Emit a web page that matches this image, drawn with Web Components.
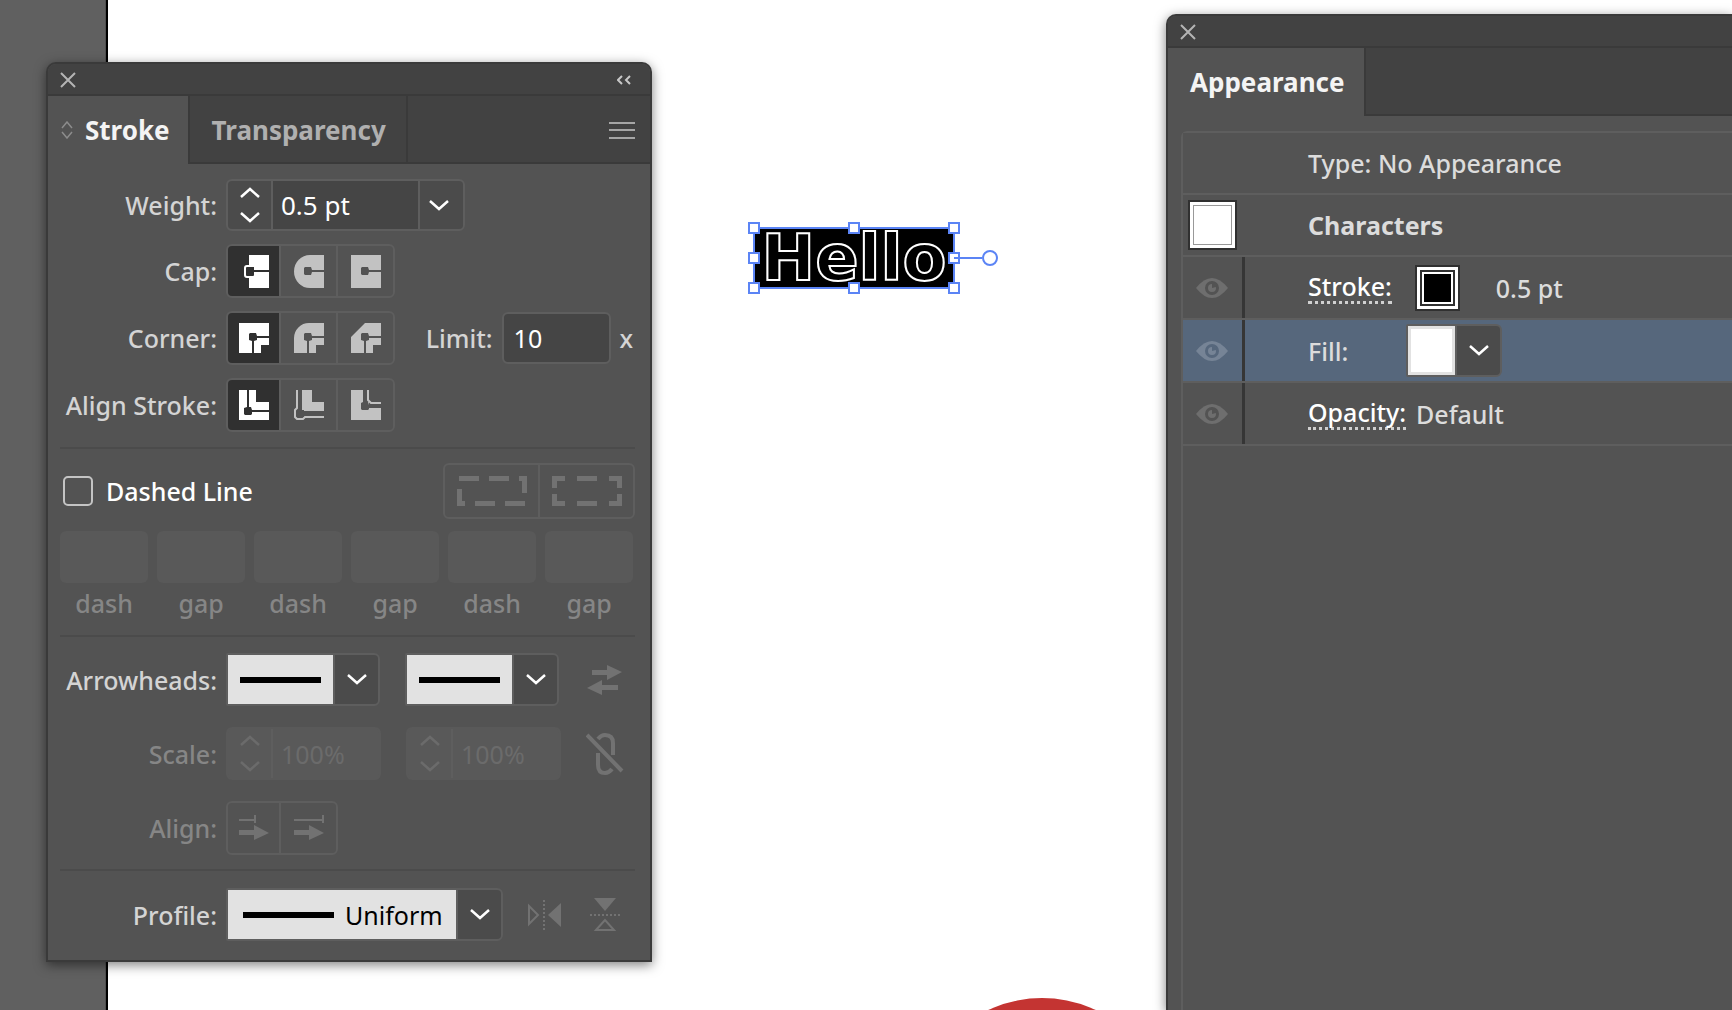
<!DOCTYPE html>
<html lang="en">
<head>
<meta charset="utf-8">
<title>Stroke and Appearance</title>
<style>
html, body {
  height: 100%;
  margin: 0;
}

body {
  overflow: hidden;
  font: 500 25px/36px "Noto Sans", "Open Sans", sans-serif;
  color: #d4d4d4;
}
</style>
</head>
<body>
<app-desktop></app-desktop>

<script>
const icons = {
  close: [16, 16, '<path d="M1 1L15 15M15 1L1 15" stroke="#b4b4b4" stroke-width="2"/>'],
  collapse: [14, 10, '<path d="M5 1L1 5L5 9M13 1L9 5L13 9" fill="none" stroke="#c8c8c8" stroke-width="2"/>'],
  menu: [26, 18, '<path d="M0 2H26M0 9H26M0 17H26" stroke="#a6a6a6" stroke-width="2"/>'],
  sort: [12, 18, '<path d="M1 7L6 1L11 7M1 11L6 17L11 11" fill="none" stroke="#8c8c8c" stroke-width="1.5"/>'],
  up: [20, 11, '<path d="M1 10L10 2L19 10" fill="none" stroke="currentColor" stroke-width="2.5"/>'],
  down: [20, 11, '<path d="M1 1L10 9L19 1" fill="none" stroke="currentColor" stroke-width="2.5"/>'],
  capButt: [30, 33, `<path d="M10 0H30V33H10Z" fill="currentColor"/>
    <rect x="6" y="11" width="10" height="11" rx="2" fill="var(--cell)" stroke="currentColor" stroke-width="2"/>
    <path d="M8 12H15V15H30V17H15V20H8Z" fill="var(--cell)"/>`],
  capRound: [30, 33, `<path d="M30 0V33H16A16 16.5 0 0 1 16 0Z" fill="currentColor"/>
    <path d="M11 12H17L18 15H30V17H18L17 20H11L10 19V13Z" fill="var(--cell)"/>`],
  capSquare: [30, 33, `<path d="M0 0H30V33H0Z" fill="currentColor"/>
    <path d="M11 12H17L18 15H30V17H18L17 20H11L10 19V13Z" fill="var(--cell)"/>`],
  cornerMiter: [30, 30, `<path d="M0 0H30V22H22V30H0Z" fill="currentColor"/>
    <path d="M11 10H17L18 13H30V15H18V17L15 18V30H13V18L10 17V11Z" fill="var(--cell)"/>`],
  cornerRound: [30, 30, `<path d="M0 30V15A15 15 0 0 1 15 0H30V22H22V30Z" fill="currentColor"/>
    <path d="M11 10H17L18 13H30V15H18V17L15 18V30H13V18L10 17V11Z" fill="var(--cell)"/>`],
  cornerBevel: [30, 30, `<path d="M0 30V14L14 0H30V22H22V30Z" fill="currentColor"/>
    <path d="M11 10H17L18 13H30V15H18V17L15 18V30H13V18L10 17V11Z" fill="var(--cell)"/>`],
  alignCenter: [30, 30, `<path d="M0 0H17V12H30V30H0Z" fill="currentColor"/>
    <path d="M8 0H10V17H12L13 20H30V22H13V24L12 25H6L5 24V18L8 17Z" fill="var(--cell)"/>`],
  alignInside: [30, 30, `<path d="M8 0H18V12H30V21H8Z" fill="currentColor"/>
    <path d="M3 0V18L1 20V27L3 29H9L11 27H30" fill="none" stroke="currentColor" stroke-width="2"/>
    <path d="M5 0H7V20H10V23H30V25H10V27H3V20H5Z" fill="var(--cell)"/>`],
  alignOutside: [30, 30, `<path d="M0 0H13V12H18V18H30V30H0Z" fill="currentColor"/>
    <path d="M17 0V10L20 13H30" fill="none" stroke="currentColor" stroke-width="2"/>
    <path d="M12 0H15V12H17L18 15H30V17H18V19L17 20H11L10 19V13L12 12Z" fill="var(--cell)"/>`],
  dashExact: [70, 30, '<path d="M2 2.5H22M32 2.5H52M62 2.5H67.500V17M2.500 13V27.500H8M18 27.500H38M48 27.500H68" fill="none" stroke="currentColor" stroke-width="5"/>'],
  dashFit: [70, 30, '<path d="M2.500 12V2.500H13M25 2.500H45M57 2.500H67.500V12M67.500 18V27.500H57M45 27.500H25M13 27.500H2.500V18" fill="none" stroke="currentColor" stroke-width="5"/>'],
  swap: [36, 30, '<path d="M5 5H20V0L35 7L20 15V10H5ZM31 20H15V15L0 23L15 30V25H31Z" fill="currentColor"/>'],
  unlink: [38, 42, '<path d="M1 2L36 38M12 6Q15 2 19 2Q27 2 27 10V22M12 20V32Q12 40 19 40Q23 40 26 36" fill="none" stroke="currentColor" stroke-width="4"/>'],
  tipBeyond: [30, 26, '<path d="M0 15H15V10L30 18L15 25V20H0Z" fill="currentColor"/><path d="M0 5H16M16 0V8" stroke="currentColor" stroke-width="2"/>'],
  tipAtEnd: [30, 26, '<path d="M0 15H15V10L30 18L15 25V20H0Z" fill="currentColor"/><path d="M0 5H29M29 0V8" stroke="currentColor" stroke-width="2"/>'],
  flipAlong: [34, 30, `<path d="M34 3V27L21 15Z" fill="currentColor"/>
    <path d="M2 6L11 15L2 24Z" fill="none" stroke="currentColor" stroke-width="2"/>
    <path d="M17 0V30" stroke="currentColor" stroke-width="2" stroke-dasharray="2 2"/>`],
  flipAcross: [30, 34, `<path d="M4 0H26L15 13Z" fill="currentColor"/>
    <path d="M6 32L15 22L24 32Z" fill="none" stroke="currentColor" stroke-width="2"/>
    <path d="M0 17H30" stroke="currentColor" stroke-width="2" stroke-dasharray="2 2"/>`],
  eye: [32, 20, `<path d="M0 10Q8 0 16 0T32 10Q24 20 16 20T0 10Z" fill="currentColor"/>
    <circle cx="16" cy="10" r="5.500" fill="currentColor" stroke="var(--cell)" stroke-width="3"/>
    <path d="M16 10V5H21L20 9Z" fill="var(--cell)"/>`],
};

class UiIcon extends HTMLElement {
  connectedCallback() {
    const [w, h, body] = icons[this.getAttribute('name')];
    this.attachShadow({ mode: 'open' }).innerHTML = `
      <style>
        :host { display: inline-flex; flex: none; }
        svg { display: block; }
      </style>
      <svg width="${w}" height="${h}" viewBox="0 0 ${w} ${h}" aria-hidden="true">${body}</svg>`;
  }
}

// Base for the elements that only need static markup and styles
class StaticElement extends HTMLElement {
  constructor() {
    super();
    this.attachShadow({ mode: 'open' }).innerHTML =
      `<style>${this.constructor.style}</style>${this.constructor.template}`;
  }
}

class FloatPanel extends StaticElement {
  static style = `
    :host {
      display: flex;
      flex-direction: column;
      box-sizing: border-box;
      border: 2px solid #3a3a3a;
      border-radius: 10px 10px 0 0;
      background: #535353;
      box-shadow: 0 3px 12px rgba(0, 0, 0, 0.5);
      overflow: hidden;
    }
    .title {
      display: flex;
      align-items: center;
      justify-content: space-between;
      height: 28px;
      padding: 2px 19px 0 12px;
      background: #424242;
      border-bottom: 2px solid #3a3a3a;
    }
    .tabs {
      display: flex;
      height: 68px;
      background: linear-gradient(#424242, #424242 66px, #3a3a3a 66px);
    }
    button {
      display: flex;
      padding: 0;
      border: 0;
      background: none;
    }
    .menu {
      margin-left: auto;
      padding: 0 15px;
      align-items: center;
    }
    :host([compact]) .extra { display: none; }
  `;
  static template = `
    <div class="title">
      <button aria-label="Close"><ui-icon name="close"></ui-icon></button>
      <button class="extra" aria-label="Collapse"><ui-icon name="collapse"></ui-icon></button>
    </div>
    <div class="tabs">
      <slot name="tab"></slot>
      <button class="menu extra" aria-label="Panel menu"><ui-icon name="menu"></ui-icon></button>
    </div>
    <slot></slot>
  `;
}

class PanelTab extends StaticElement {
  static style = `
    :host {
      display: flex;
      box-sizing: border-box;
      border-right: 2px solid #3a3a3a;
      color: #b0b0b0;
    }
    :host([selected]) {
      background: #535353;
      color: #f4f4f4;
    }
    button {
      display: flex;
      align-items: center;
      gap: 12px;
      padding: 0 20px 0 22px;
      border: 0;
      background: none;
      color: inherit;
      font: inherit;
      font-size: 26px;
      font-weight: 700;
    }
    :host([sortable]) button { padding: 0 18px 0 13px; }
    ui-icon { display: none; }
    :host([sortable]) ui-icon { display: inline-flex; }
  `;
  static template = '<button><ui-icon name="sort"></ui-icon><slot></slot></button>';
}

class ButtonStrip extends StaticElement {
  static style = `
    :host {
      --cell: #535353;
      display: inline-flex;
      gap: 2px;
      border: 2px solid #5e5e5e;
      border-radius: 6px;
      background: #5e5e5e;
      overflow: hidden;
      color: #c2c2c2;
    }
    :host([disabled]) { color: #727272; }
    ::slotted(button) {
      display: flex;
      align-items: center;
      justify-content: center;
      width: 55px;
      height: 50px;
      padding: 0;
      border: 0;
      background: var(--cell);
      color: inherit;
    }
    ::slotted(button:first-child) { width: 51px; }
    :host([wide]) ::slotted(button) {
      width: 93px;
      height: 52px;
    }
    ::slotted(button[aria-pressed="true"]) {
      --cell: #303030;
      color: #fff;
    }
  `;
  static template = '<slot></slot>';
}

class StepperField extends StaticElement {
  static style = `
    :host {
      display: inline-flex;
      gap: 2px;
      border: 2px solid #5e5e5e;
      border-radius: 6px;
      background: #5e5e5e;
      overflow: hidden;
      color: #fff;
    }
    .steps, .more {
      display: flex;
      flex-direction: column;
      align-items: center;
      justify-content: center;
      box-sizing: border-box;
      width: 43px;
      height: 48px;
      background: #4b4b4b;
    }
    .steps { justify-content: space-between; }
    .more { padding-right: 5px; }
    button {
      display: flex;
      padding: 6px 10px;
      border: 0;
      background: none;
      color: inherit;
    }
    ::slotted(input) {
      box-sizing: border-box;
      width: 145px;
      border: 0;
      border-radius: 0;
      padding: 0 8px;
      background: #454545;
      color: inherit;
      font: inherit;
      font-size: 26px;
      font-weight: 400;
    }
    :host(:not([menu])) .more { display: none; }
    :host([disabled]) {
      border-color: #595959;
      color: #6b6b6b;
    }
    :host([disabled]) .steps {
      height: 49px;
      background: #595959;
    }
    :host([disabled]) ::slotted(input) {
      width: 106px;
      background: #595959;
      font-size: 25px;
    }
  `;
  static template = `
    <div class="steps">
      <button aria-label="Increase"><ui-icon name="up"></ui-icon></button>
      <button aria-label="Decrease"><ui-icon name="down"></ui-icon></button>
    </div>
    <slot></slot>
    <div class="more"><button aria-label="Presets"><ui-icon name="down"></ui-icon></button></div>
  `;
}

// The slotted select lies over the preview and the chevron
class PreviewSelect extends StaticElement {
  static style = `
    :host {
      display: inline-grid;
      grid-template-columns: var(--preview, 105px) 43px;
      gap: 2px;
      box-sizing: border-box;
      height: 53px;
      border: 2px solid #5e5e5e;
      border-radius: 2px 6px 6px 2px;
      background: #5e5e5e;
      overflow: hidden;
      color: #fff;
    }
    .preview {
      grid-area: 1 / 1;
      display: flex;
      align-items: center;
      padding: 0 12px;
      background: #e2e2e2;
    }
    .line {
      flex: 1;
      height: 6px;
      background: #000;
    }
    :host([named]) .preview { padding: 0 122px 0 15px; }
    :host([swatch]) .preview { padding: 3px; }
    :host([swatch]) .line {
      height: 100%;
      background: #fff;
    }
    .chevron {
      grid-area: 1 / 2;
      display: flex;
      align-items: center;
      justify-content: center;
      background: #4b4b4b;
    }
    ::slotted(select) {
      grid-area: 1 / 1 / 2 / 3;
      z-index: 1;
      min-width: 0;
      appearance: none;
      border: 0;
      padding: 0 0 0 117px;
      background: none;
      color: #000;
      font: inherit;
      font-weight: 400;
    }
  `;
  static template = `
    <div class="preview"><div class="line"></div></div>
    <div class="chevron"><ui-icon name="down"></ui-icon></div>
    <slot></slot>
  `;
}

class StrokeOptions extends StaticElement {
  static style = `
    :host { display: block; }
    section {
      display: flex;
      flex-direction: column;
      gap: 13px;
      margin: 0 15px 0 12px;
      padding: 15px 0;
      border-bottom: 2px solid #4b4b4b;
    }
    .dashes {
      gap: 12px;
      padding: 14px 0;
    }
    .heads {
      gap: 21px;
      padding: 16px 0 14px;
    }
    .profile {
      padding: 17px 0 19px;
      border: 0;
    }
    .row {
      display: flex;
      align-items: center;
    }
    .name {
      width: 157px;
      margin-right: 9px;
      text-align: right;
      white-space: nowrap;
    }
    .off { color: #868686; }
    .second { margin-left: 25px; }
    .limit { margin: 0 9px 0 auto; }
    .limit-field {
      box-sizing: border-box;
      width: 109px;
      height: 52px;
      margin-right: 9px;
      padding: 0 10px;
      border: 2px solid #5e5e5e;
      border-radius: 6px;
      background: #454545;
      color: #fff;
      font: inherit;
      font-weight: 400;
    }
    .unit { margin-right: 2px; }
    .check {
      display: flex;
      align-items: center;
      gap: 13px;
      margin-right: auto;
      padding-left: 3px;
      color: #fff;
    }
    .check input {
      appearance: none;
      width: 30px;
      height: 30px;
      margin: 0;
      border: 2px solid #c4c4c4;
      border-radius: 5px;
    }
    .lengths {
      display: grid;
      grid-template-columns: repeat(6, 1fr);
      gap: 9px;
      padding-right: 2px;
    }
    .lengths label {
      display: flex;
      flex-direction: column;
      gap: 2px;
      color: #868686;
      text-align: center;
    }
    .lengths input {
      box-sizing: border-box;
      width: 100%;
      height: 52px;
      border: 0;
      border-radius: 6px;
      background: #595959;
    }
    .plain {
      display: flex;
      justify-content: center;
      width: 38px;
      margin: 0 11px 0 auto;
      padding: 0;
      border: 0;
      background: none;
      color: #727272;
    }
    .profile .plain { margin-left: 22px; }
    .profile preview-select { --preview: 228px; }
    .profile .plain:last-child { margin-left: auto; }
  `;
  static template = `
    <section>
      <div class="row">
        <label class="name" for="weight">Weight:</label>
        <stepper-field menu><input id="weight" value="0.5 pt"></stepper-field>
      </div>
      <div class="row">
        <span class="name">Cap:</span>
        <button-strip role="group" aria-label="Cap">
          <button aria-label="Butt cap" aria-pressed="true"><ui-icon name="capButt"></ui-icon></button>
          <button aria-label="Round cap"><ui-icon name="capRound"></ui-icon></button>
          <button aria-label="Projecting cap"><ui-icon name="capSquare"></ui-icon></button>
        </button-strip>
      </div>
      <div class="row">
        <span class="name">Corner:</span>
        <button-strip role="group" aria-label="Corner">
          <button aria-label="Miter join" aria-pressed="true"><ui-icon name="cornerMiter"></ui-icon></button>
          <button aria-label="Round join"><ui-icon name="cornerRound"></ui-icon></button>
          <button aria-label="Bevel join"><ui-icon name="cornerBevel"></ui-icon></button>
        </button-strip>
        <label class="limit" for="limit">Limit:</label>
        <input class="limit-field" id="limit" value="10">
        <span class="unit">x</span>
      </div>
      <div class="row">
        <span class="name">Align Stroke:</span>
        <button-strip role="group" aria-label="Align Stroke">
          <button aria-label="Center" aria-pressed="true"><ui-icon name="alignCenter"></ui-icon></button>
          <button aria-label="Inside"><ui-icon name="alignInside"></ui-icon></button>
          <button aria-label="Outside"><ui-icon name="alignOutside"></ui-icon></button>
        </button-strip>
      </div>
    </section>
    <section class="dashes">
      <div class="row">
        <label class="check"><input type="checkbox">Dashed Line</label>
        <button-strip wide disabled>
          <button aria-label="Exact lengths" disabled><ui-icon name="dashExact"></ui-icon></button>
          <button aria-label="Fit to corners" disabled><ui-icon name="dashFit"></ui-icon></button>
        </button-strip>
      </div>
      <div class="lengths">
        <label><input disabled>dash</label>
        <label><input disabled>gap</label>
        <label><input disabled>dash</label>
        <label><input disabled>gap</label>
        <label><input disabled>dash</label>
        <label><input disabled>gap</label>
      </div>
    </section>
    <section class="heads">
      <div class="row">
        <label class="name" for="start">Arrowheads:</label>
        <preview-select><select id="start"><option aria-label="None"></option></select></preview-select>
        <preview-select class="second"><select aria-label="End arrowhead"><option aria-label="None"></option></select></preview-select>
        <button class="plain" aria-label="Swap arrowheads" disabled><ui-icon name="swap"></ui-icon></button>
      </div>
      <div class="row">
        <label class="name off" for="scale">Scale:</label>
        <stepper-field disabled><input id="scale" value="100%" disabled></stepper-field>
        <stepper-field class="second" disabled><input aria-label="End scale" value="100%" disabled></stepper-field>
        <button class="plain" aria-label="Link scales" disabled><ui-icon name="unlink"></ui-icon></button>
      </div>
      <div class="row">
        <span class="name off">Align:</span>
        <button-strip disabled>
          <button aria-label="Tip beyond end" disabled><ui-icon name="tipBeyond"></ui-icon></button>
          <button aria-label="Tip at end" disabled><ui-icon name="tipAtEnd"></ui-icon></button>
        </button-strip>
      </div>
    </section>
    <section class="profile">
      <div class="row">
        <label class="name" for="profile">Profile:</label>
        <preview-select named><select id="profile"><option>Uniform</option></select></preview-select>
        <button class="plain" aria-label="Flip along" disabled><ui-icon name="flipAlong"></ui-icon></button>
        <button class="plain" aria-label="Flip across" disabled><ui-icon name="flipAcross"></ui-icon></button>
      </div>
    </section>
  `;
}

class AppearanceRow extends StaticElement {
  static style = `
    :host {
      --cell: #535353;
      display: flex;
      align-items: center;
      box-sizing: border-box;
      height: 62px;
      border-bottom: 2px solid #5e5e5e;
      background: var(--cell);
      color: #dcdcdc;
    }
    :host([eye]) { height: 63px; }
    :host([selected]) { --cell: #56677c; }
    .lead {
      display: flex;
      align-items: center;
      justify-content: center;
      box-sizing: border-box;
      width: 62px;
      height: 100%;
      margin-right: 63px;
      padding: 0 8px 0 5px;
    }
    .eye {
      display: none;
      padding: 0;
      border: 0;
      background: none;
      color: #6e6e6e;
    }
    :host([selected]) .eye { color: #768496; }
    :host([eye]) .lead {
      padding: 0 2px 0 0;
      border-right: 3px solid #363636;
    }
    :host([eye]) .eye { display: flex; }
    .content {
      display: flex;
      align-items: center;
      white-space: pre;
    }
  `;
  static template = `
    <div class="lead"><slot name="lead"></slot><button class="eye" aria-label="Toggle visibility"><ui-icon name="eye"></ui-icon></button></div>
    <div class="content"><slot></slot></div>
  `;
}

class AppearanceList extends StaticElement {
  static style = `
    :host {
      display: block;
      flex: 1;
      margin: 15px 0 0 13px;
      border: solid #5e5e5e;
      border-width: 2px 0 0 2px;
      border-radius: 6px 0 0 0;
    }
    b { font-weight: 700; }
    a {
      border-bottom: 3px dotted #d0d0d0;
      color: #fff;
      line-height: 30px;
      text-decoration: none;
    }
    .thumb {
      box-sizing: border-box;
      width: 49px;
      height: 50px;
      flex: none;
      border: 2px solid #303030;
      outline: 1px solid #999;
      outline-offset: -6px;
      background: #fff;
    }
    .stroke-color {
      display: flex;
      box-sizing: border-box;
      width: 45px;
      height: 46px;
      margin: 0 36px 0 23px;
      padding: 3px;
      border: 2px solid #303030;
      background: #fff;
    }
    .stroke-color::before {
      content: "";
      flex: 1;
      border: 2px solid #303030;
      outline: 2px solid #fff;
      outline-offset: -4px;
      background: #000;
    }
    .fill-name { width: 98px; }
    preview-select { --preview: 47px; }
    .value { margin-left: 10px; }
  `;
  static template = `
    <appearance-row>Type: No Appearance</appearance-row>
    <appearance-row><div class="thumb" slot="lead"></div><b>Characters</b></appearance-row>
    <appearance-row eye><a href="#stroke">Stroke:</a><button class="stroke-color" aria-label="Stroke color"></button><span>0.5 pt</span></appearance-row>
    <appearance-row eye selected><label class="fill-name" for="fill">Fill:</label><preview-select swatch><select id="fill"><option aria-label="White"></option></select></preview-select></appearance-row>
    <appearance-row eye><a href="#opacity">Opacity:</a><span class="value">Default</span></appearance-row>
  `;
}

// Text object with its bounding box, handles and rotation widget
class SelectedText extends StaticElement {
  static style = `
    :host { display: block; }
    svg {
      display: block;
      overflow: visible;
    }
    text {
      font: 700 64px "DejaVu Sans", sans-serif;
      fill: #000;
      stroke: #fff;
      stroke-width: 2px;
    }
    .box, .handles, .rotate {
      stroke: #5b84f5;
      stroke-width: 2px;
    }
    .box { fill: none; }
    .handles, .rotate { fill: #fff; }
  `;
  static template = `
    <svg width="200" height="60">
      <path d="M0 0H200V60H0Z"/>
      <text x="100" y="52" text-anchor="middle">Hello</text>
      <path class="box" d="M0 0H200V60H0Z"/>
      <path class="handles" d="M-5 -5h10v10h-10zM95 -5h10v10h-10zM195 -5h10v10h-10zM-5 25h10v10h-10zM195 25h10v10h-10zM-5 55h10v10h-10zM95 55h10v10h-10zM195 55h10v10h-10z"/>
      <path class="box" d="M200 30H228"/>
      <circle class="rotate" cx="236" cy="30" r="7"/>
    </svg>
  `;
}

class AppDesktop extends StaticElement {
  static style = `
    :host {
      display: flex;
      position: relative;
      height: 100%;
      overflow: hidden;
      background: #fff;
    }
    .pasteboard {
      width: 105px;
      background: #606060;
      border-right: 1px solid #505050;
      box-shadow: 2px 0 #000;
    }
    selected-text, .disc, float-panel { position: absolute; }
    selected-text {
      left: 754px;
      top: 228px;
    }
    .disc {
      left: 915px;
      top: 998px;
      width: 254px;
      height: 254px;
      border-radius: 50%;
      background: #c43432;
    }
    .stroke {
      left: 46px;
      top: 62px;
      width: 35%;
      min-width: 606px;
    }
    .appearance {
      left: 1166px;
      right: 0;
      top: 14px;
      bottom: 0;
      border-width: 2px 0 0 2px;
      border-radius: 10px 0 0 0;
    }
  `;
  static template = `
    <div class="pasteboard"></div>
    <selected-text></selected-text>
    <div class="disc"></div>
    <float-panel class="stroke">
      <panel-tab slot="tab" selected sortable>Stroke</panel-tab>
      <panel-tab slot="tab">Transparency</panel-tab>
      <stroke-options></stroke-options>
    </float-panel>
    <float-panel class="appearance" compact>
      <panel-tab slot="tab" selected>Appearance</panel-tab>
      <appearance-list></appearance-list>
    </float-panel>
  `;
}

customElements.define('ui-icon', UiIcon);
customElements.define('float-panel', FloatPanel);
customElements.define('panel-tab', PanelTab);
customElements.define('button-strip', ButtonStrip);
customElements.define('stepper-field', StepperField);
customElements.define('preview-select', PreviewSelect);
customElements.define('stroke-options', StrokeOptions);
customElements.define('appearance-row', AppearanceRow);
customElements.define('appearance-list', AppearanceList);
customElements.define('selected-text', SelectedText);
customElements.define('app-desktop', AppDesktop);
</script>
</body>
</html>
